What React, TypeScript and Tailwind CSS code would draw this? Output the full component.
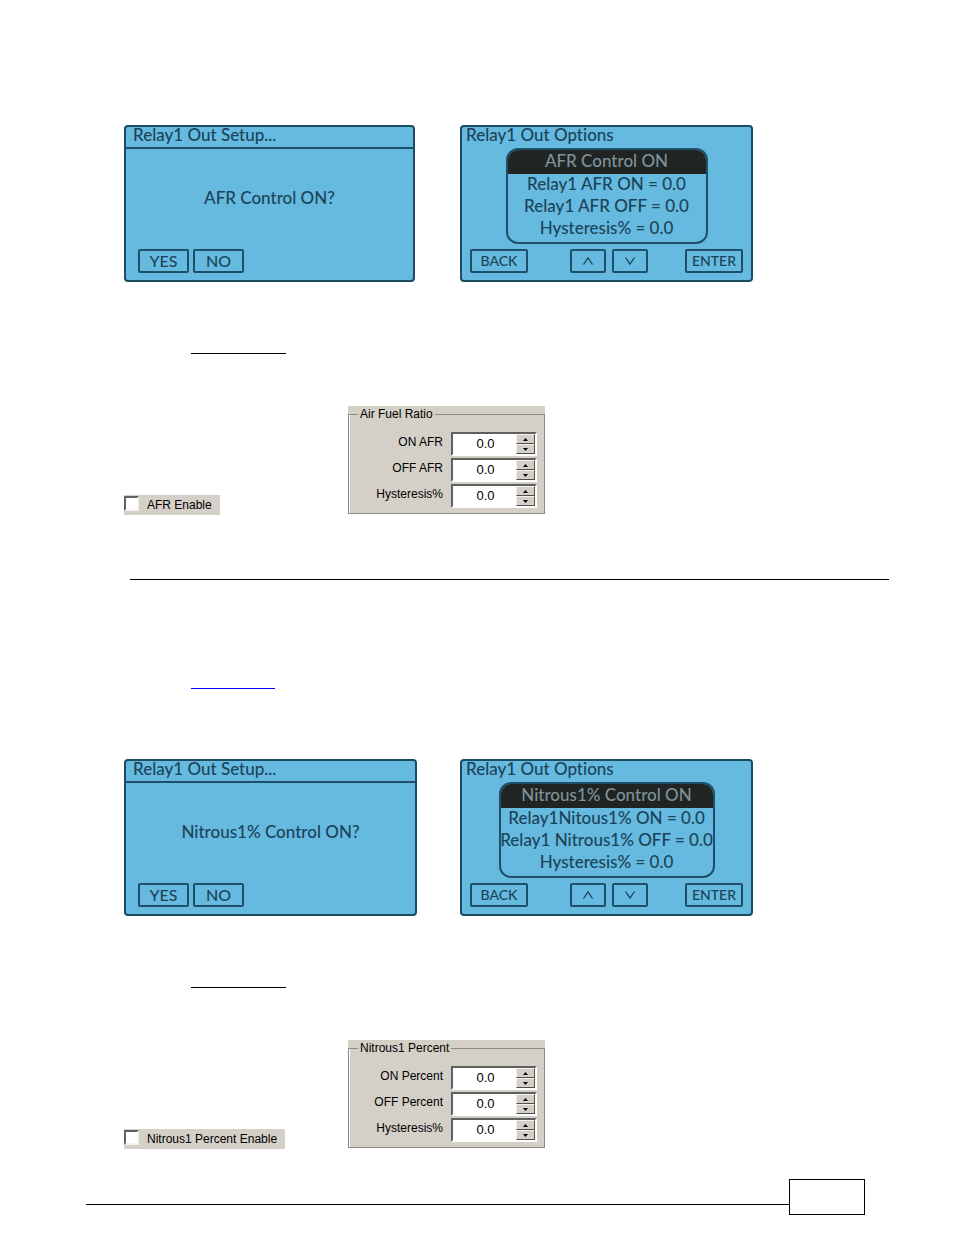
import { ReactNode } from "react";
import { clsx } from "clsx";

interface LcdButtonProps {
  className: string;
  ariaLabel?: string;
  children: ReactNode;
}

function LcdButton({ className, ariaLabel, children }: LcdButtonProps) {
  return (
    <button
      type="button"
      aria-label={ariaLabel}
      className={clsx(
        "flex h-6 items-center justify-center rounded-xs border-2 border-[#1f506a] leading-5",
        className
      )}
    >
      {children}
    </button>
  );
}

function Lcd({ className, children }: { className?: string; children: ReactNode }) {
  return (
    <section
      className={clsx(
        "flex h-[157px] shrink-0 flex-col rounded-sm border-2 border-[#1c4c64] bg-[#66b9df] font-['Lato',sans-serif] text-[17px] font-medium text-[#1b4459] [font-variant-ligatures:none]",
        className
      )}
    >
      {children}
    </section>
  );
}

function SetupScreen({ question, className }: { question: string; className: string }) {
  return (
    <Lcd className={className}>
      <h2 className="h-[22px] border-b-2 border-[#1f506a] px-[7px] leading-4">
        Relay1 Out Setup...
      </h2>
      <p className="flex flex-1 items-center justify-center pb-0.5">{question}</p>
      <div className="flex gap-1 px-3 pb-[7px] text-base">
        <LcdButton className="w-[51px]">YES</LcdButton>
        <LcdButton className="w-[51px]">NO</LcdButton>
      </div>
    </Lcd>
  );
}

interface OptionsScreenProps {
  title: string;
  rows: string[];
  menuClass: string;
}

function OptionsScreen({ title, rows, menuClass }: OptionsScreenProps) {
  return (
    <Lcd className="w-[293px]">
      <h2 className="h-5 px-1 leading-4">Relay1 Out Options</h2>
      <div
        className={clsx(
          "mx-auto mt-px flex h-24 flex-col overflow-hidden rounded-xl border-2 border-[#1f506a] text-center",
          menuClass
        )}
      >
        <h3 className="h-6 shrink-0 bg-[#202422] leading-[22px] text-[#7d929a]">{title}</h3>
        {rows.map((row) => (
          <p key={row} className="-mx-2 h-[22px] leading-5 whitespace-nowrap">
            {row}
          </p>
        ))}
      </div>
      <div className="mt-auto flex items-center px-2 pb-[7px] text-sm">
        <LcdButton className="w-[58px]">BACK</LcdButton>
        <div className="flex flex-1 justify-center gap-1.5 pl-1">
          <LcdButton className="w-9" ariaLabel="Up">
            <svg width="12" height="10" viewBox="0 0 12 10" fill="none" stroke="currentColor" strokeWidth="1.3">
              <path d="M1.5 8.5 6 2l4.5 6.5" />
            </svg>
          </LcdButton>
          <LcdButton className="w-9" ariaLabel="Down">
            <svg width="12" height="10" viewBox="0 0 12 10" fill="none" stroke="currentColor" strokeWidth="1.3">
              <path d="M1.5 1.5 6 8l4.5-6.5" />
            </svg>
          </LcdButton>
        </div>
        <LcdButton className="w-[58px]">ENTER</LcdButton>
      </div>
    </Lcd>
  );
}

function SpinButton({ up }: { up?: boolean }) {
  return (
    <button
      type="button"
      aria-label={up ? "Increase" : "Decrease"}
      className="flex flex-1 items-center justify-center border border-t-[#f4f2ee] border-r-[#505050] border-b-[#505050] border-l-[#f4f2ee] bg-[#d4d0c8]"
    >
      <svg width="5" height="3" viewBox="0 0 5 3">
        <path d={up ? "M0 3 2.5 0 5 3z" : "M0 0h5L2.5 3z"} />
      </svg>
    </button>
  );
}

function SpinField({ id, label }: { id: string; label: string }) {
  return (
    <div className="flex items-start justify-end">
      <label htmlFor={id} className="pr-2 leading-5">
        {label}
      </label>
      <div className="flex h-6 w-[86px] border-2 border-t-[#606060] border-r-white border-b-white border-l-[#606060] bg-white">
        <input
          id={id}
          type="text"
          defaultValue="0.0"
          className="w-full min-w-0 flex-1 pl-0.5 text-center text-[13px] outline-none"
        />
        <div className="flex w-[19px] shrink-0 flex-col">
          <SpinButton up />
          <SpinButton />
        </div>
      </div>
    </div>
  );
}

interface FieldGroupProps {
  id: string;
  title: string;
  labels: string[];
}

function FieldGroup({ id, title, labels }: FieldGroupProps) {
  return (
    <div className="w-[197px] shrink-0 bg-[#d4d0c8]">
      <fieldset className="h-[108px] border border-[#8c8a85] pr-[7px] pl-2 shadow-[inset_1px_0_0_#ffffff]">
        <legend className="ml-px px-0.5 leading-4">{title}</legend>
        <div className="flex flex-col gap-0.5 pt-2.5">
          {labels.map((label, i) => (
            <SpinField key={label} id={`${id}-${i}`} label={label} />
          ))}
        </div>
      </fieldset>
    </div>
  );
}

function EnableBox({ label }: { label: string }) {
  return (
    <label className="-mb-px flex h-5 items-center gap-2 bg-[#d4d0c8] pr-2 whitespace-nowrap">
      <input
        type="checkbox"
        className="mb-1 size-[15px] appearance-none border-2 border-t-[#606060] border-r-[#f4f2ee] border-b-[#f4f2ee] border-l-[#606060] bg-white"
      />
      {label}
    </label>
  );
}

function SoftwareRow({ enable, group }: { enable: string; group: FieldGroupProps }) {
  return (
    <div className="flex items-end font-['Liberation_Sans',sans-serif] text-xs text-black">
      <div className="flex w-[224px] shrink-0">
        <EnableBox label={enable} />
      </div>
      <FieldGroup {...group} />
    </div>
  );
}

export default function App() {
  return (
    <div className="bg-white pt-[125px] pb-5">
      <main className="pl-[124px]">
        <div className="flex">
          <div className="w-[336px] shrink-0">
            <SetupScreen question="AFR Control ON?" className="w-[291px]" />
          </div>
          <OptionsScreen
            title="AFR Control ON"
            rows={["Relay1 AFR ON = 0.0", "Relay1 AFR OFF = 0.0", "Hysteresis% = 0.0"]}
            menuClass="w-[202px]"
          />
        </div>
        <div className="mt-[71px] ml-[67px] w-[95px] border-b border-black" />
        <div className="mt-[52px]">
          <SoftwareRow
            enable="AFR Enable"
            group={{ id: "afr", title: "Air Fuel Ratio", labels: ["ON AFR", "OFF AFR", "Hysteresis%"] }}
          />
        </div>

        <hr className="mt-[65px] mr-[65px] ml-1.5 border-black" />

        <div className="mt-[108px] ml-[67px] w-[84px] border-b border-[#0000ff]" />
        <div className="mt-[70px] flex">
          <div className="w-[336px] shrink-0">
            <SetupScreen question="Nitrous1% Control ON?" className="w-[293px]" />
          </div>
          <OptionsScreen
            title="Nitrous1% Control ON"
            rows={["Relay1Nitous1% ON = 0.0", "Relay1 Nitrous1% OFF = 0.0", "Hysteresis% = 0.0"]}
            menuClass="w-[216px]"
          />
        </div>
        <div className="mt-[71px] ml-[67px] w-[95px] border-b border-black" />
        <div className="mt-[52px]">
          <SoftwareRow
            enable="Nitrous1 Percent Enable"
            group={{ id: "nitrous", title: "Nitrous1 Percent", labels: ["ON Percent", "OFF Percent", "Hysteresis%"] }}
          />
        </div>
      </main>

      {/* page number box hangs on the end of the footer rule */}
      <footer className="mt-[31px] flex items-start pr-[89px] pl-[86px]">
        <div className="mt-[25px] flex-1 border-b border-black" />
        <div className="h-9 w-[76px] border border-black" />
      </footer>
    </div>
  );
}
